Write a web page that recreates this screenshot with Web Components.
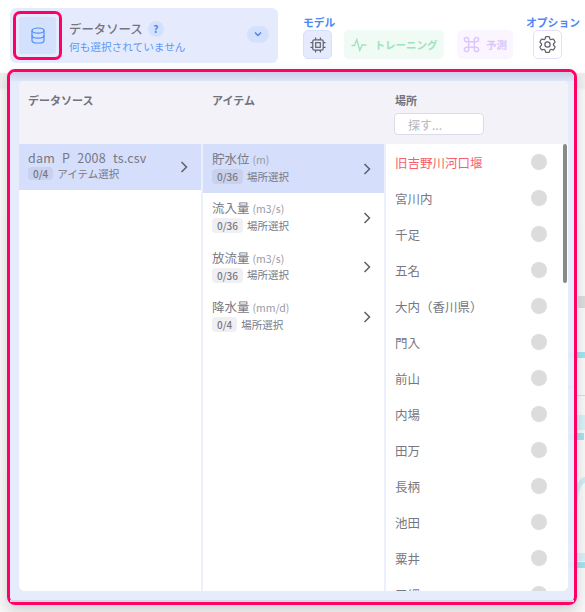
<!DOCTYPE html>
<html lang="ja"><head><meta charset="utf-8">
<style>
html,body{margin:0;padding:0;width:585px;height:612px;overflow:hidden;background:#fff;
font-family:"Noto Sans CJK JP","Noto Sans",sans-serif;}
</style></head><body>
<app-shell></app-shell>
<template id="t-shell">
<style>
:host{display:flex;flex-direction:column;width:585px;height:612px;position:relative;overflow:hidden;background:#fff}
.top{display:flex;height:69px;box-sizing:border-box;padding:8px 0 0 10px;flex:none;position:relative;z-index:2}
.right{display:flex;margin-left:25px}
.shade{position:absolute;left:0;right:0;top:73px;bottom:0;background:linear-gradient(#eeeeee 0,#f1f1f1 15px,#fafafa 17px,#f8f8f8 100%)}
.deco{position:absolute;left:0;top:0;width:585px;height:612px;filter:blur(.6px)}
.deco i{position:absolute;display:block;right:0}
.panel{flex:none;box-sizing:border-box;margin:0 0 0 7px;width:570px;height:536px;border:3px solid #ff0066;border-radius:8px;
background:rgba(229,235,253,.93);padding:9px 6px 11px 9px;box-shadow:0 6px 14px rgba(0,0,0,.16);position:relative;z-index:1}
.panel::before{content:"";position:absolute;left:0;right:0;top:0;height:9px;background:linear-gradient(#c9d0e6,#dfe5f8);border-radius:5px 5px 0 0}
.panel::after{content:"";position:absolute;left:0;right:0;bottom:0;height:2px;background:#d4d6e2}
.inner{height:100%;display:grid;grid-template-columns:184px 183px 1fr;grid-template-rows:63px 1fr;border-radius:6px;overflow:hidden;background:#fff;position:relative}
</style>
<div class="shade"></div>
<div class="deco">
<i style="top:352px;left:568px;height:6px;background:#a5e3ef"></i>
<i style="top:385px;left:568px;width:7px;height:4px;background:#cdc6f8"></i>
<i style="top:395px;left:577px;height:1px;background:#ddd6f8"></i>
<i style="top:415px;left:568px;height:15px;background:#d9f0f6"></i>
<i style="top:433px;left:568px;right:1px;height:7px;background:#a5e3ef"></i>
<i style="top:477px;left:568px;height:60px;border-radius:100% 0 0 0;border-left:6px solid #cdeef4;border-top:6px solid #cdeef4"></i>
<i style="top:553px;left:568px;height:8px;background:#d9f0f6"></i>
<i style="top:562px;left:568px;height:6px;background:#a5e3ef"></i>
<i style="top:296px;left:578px;height:12px;background:#dcdcdc"></i>
</div>
<div class="top">
<source-select></source-select>
<div class="right"><tool-bar></tool-bar></div>
</div>
<div class="panel"><div class="inner">
<col-head label="データソース"></col-head><col-head label="アイテム"></col-head><col-head label="場所" search></col-head>
<list-col>
<nav-row selected file name="dam_P_2008_ts.csv" count="0/4" hint="アイテム選択"></nav-row>
</list-col>
<list-col>
<nav-row selected name="貯水位" unit="(m)" count="0/36" hint="場所選択" tall></nav-row>
<nav-row name="流入量" unit="(m3/s)" count="0/36" hint="場所選択" tall></nav-row>
<nav-row name="放流量" unit="(m3/s)" count="0/36" hint="場所選択" tall></nav-row>
<nav-row name="降水量" unit="(mm/d)" count="0/4" hint="場所選択" tall></nav-row>
</list-col>
<place-list></place-list>
</div></div>
</template>

<template id="t-source">
<style>
:host{display:flex;align-items:center;box-sizing:border-box;width:268px;height:55px;background:#e5ebfd;border-radius:6px;padding:0 9px 0 3px;position:relative}
.ic{box-sizing:border-box;width:49px;height:49px;border:3px solid #ff0066;border-radius:7px;padding:3px;flex:none}
.ic div{width:100%;height:100%;background:#d3e1fd;border-radius:3px;display:flex;align-items:center;justify-content:center}
svg{display:block}
.txt{flex:1;margin-left:7px;min-width:0;margin-top:2px}
.t{display:flex;align-items:center;font-size:12.4px;line-height:18px;color:#75757f;font-weight:500}
.q{width:16px;height:16px;border-radius:50%;background:#d3e1fd;color:#4b83f5;font-size:10px;font-weight:700;text-align:center;line-height:16px;margin-left:5px}
.s{font-size:10.65px;line-height:15px;color:#5f98f8;margin-top:1px}
.dd{width:22px;height:17px;border-radius:9px;background:#d3e1fd;display:flex;align-items:center;justify-content:center;flex:none;margin-top:-3px}
</style>
<div class="ic"><div><svg width="16" height="17" viewBox="0 0 16 17" fill="none" stroke="#4f8df8" stroke-width="1.2"><ellipse cx="8" cy="3.6" rx="6" ry="2.6"/><path d="M2 3.6v9.8c0 1.4 2.7 2.6 6 2.6s6-1.2 6-2.6V3.6"/><path d="M2 8.5c0 1.4 2.7 2.6 6 2.6s6-1.2 6-2.6"/></svg></div></div>
<div class="txt"><div class="t">データソース<span class="q">?</span></div><div class="s">何も選択されていません</div></div>
<div class="dd"><svg width="8" height="6" viewBox="0 0 8 6" fill="none" stroke="#4f7fe6" stroke-width="1.4"><path d="M1 1.5l3 3 3-3"/></svg></div>
</template>

<template id="t-tool">
<style>
:host{display:flex}
.g{display:flex;flex-direction:column;align-items:flex-start}
.g.mg{width:29px}
.l{font-size:10.8px;line-height:14px;color:#4b87f6;font-weight:700;height:14px;margin-top:7px;white-space:nowrap;margin-bottom:1px}
.b{box-sizing:border-box;height:29px;border-radius:5px;display:flex;align-items:center;justify-content:center;font-size:10.5px;font-weight:700;white-space:nowrap}
svg{display:block}
.m{width:29px;background:#e5ebfd;border:1px solid #d3e1fd}
.tr{width:100px;background:#f0fbf5;color:#a0e2bb;margin-left:12px;gap:8px;margin-top:22px}
.pr{width:56px;background:#faf5ff;color:#dcc6fb;margin-left:13px;gap:6px;margin-top:22px}
.o{width:29px;background:#fff;border:1px solid #e4e0fb;margin-left:7px}
.og{margin-left:13px}
</style>
<div class="g mg"><div class="l">モデル</div><div class="b m"><svg width="16" height="16" viewBox="0 0 16 16" fill="none" stroke="#5f5f6c" stroke-width="1.2"><rect x="2.8" y="2.8" width="10.4" height="10.4" rx="1.5"/><rect x="5.7" y="5.7" width="4.6" height="4.6"/><path d="M5.6 0.5v2.3M10.4 0.5v2.3M5.6 13.2v2.3M10.4 13.2v2.3M0.5 5.6h2.3M0.5 10.4h2.3M13.2 5.6h2.3M13.2 10.4h2.3"/></svg></div></div>
<div class="b tr"><svg width="16" height="14" viewBox="0 0 16 14" fill="none" stroke="#a0e2bb" stroke-width="1.3"><path d="M0.5 7.5h3l2.3-6 3 11 2.2-5.5h4.5"/></svg><span>トレーニング</span></div>
<div class="b pr"><svg width="17" height="17" viewBox="0 0 15 15" fill="none" stroke="#dcc6fb" stroke-width="1.3"><path d="M5 5h5v5H5zM5 5H3.2A1.9 1.9 0 1 1 5 3.2zM10 5V3.2A1.9 1.9 0 1 1 11.8 5zM10 10h1.8A1.9 1.9 0 1 1 10 11.8zM5 10v1.8A1.9 1.9 0 1 1 3.2 10z"/></svg><span>予測</span></div>
<div class="g og"><div class="l">オプション</div><div class="b o"><svg width="21" height="21" viewBox="0 0 24 24" fill="none" stroke="#5f5f6c" stroke-width="1.4" stroke-linejoin="round"><path d="M9.594 3.94c.09-.542.56-.94 1.11-.94h2.593c.55 0 1.02.398 1.11.94l.213 1.281c.063.374.313.686.645.87.074.04.147.083.22.127.325.196.72.257 1.075.124l1.217-.456a1.125 1.125 0 011.37.49l1.296 2.247a1.125 1.125 0 01-.26 1.431l-1.003.827c-.293.24-.438.613-.431.992a6.759 6.759 0 010 .255c-.007.378.138.75.43.99l1.005.828c.424.35.534.954.26 1.43l-1.298 2.247a1.125 1.125 0 01-1.369.491l-1.217-.456c-.355-.133-.75-.072-1.076.124a6.57 6.57 0 01-.22.128c-.331.183-.581.495-.644.869l-.213 1.28c-.09.543-.56.941-1.11.941h-2.594c-.55 0-1.02-.398-1.11-.94l-.213-1.281c-.062-.374-.312-.686-.644-.87a6.52 6.52 0 01-.22-.127c-.325-.196-.72-.257-1.076-.124l-1.217.456a1.125 1.125 0 01-1.369-.49l-1.297-2.247a1.125 1.125 0 01.26-1.431l1.004-.827c.292-.24.437-.613.43-.992a6.932 6.932 0 010-.255c.007-.378-.138-.75-.43-.99l-1.004-.828a1.125 1.125 0 01-.26-1.43l1.297-2.247a1.125 1.125 0 011.37-.491l1.216.456c.356.133.751.072 1.076-.124.072-.044.146-.087.22-.128.332-.183.582-.495.644-.869l.214-1.281z"/><path d="M15 12a3 3 0 11-6 0 3 3 0 016 0z"/></svg></div></div>
</template>

<template id="t-head">
<style>
:host{display:block;background:#f2f2f8;padding:11px 9px 0;font-size:11px;font-weight:700;color:#72727e;line-height:16px;box-sizing:border-box}
input{display:block;box-sizing:border-box;width:90px;height:22px;margin:5px 0 0 -1px;border:1px solid #dcdce8;border-radius:4px;background:#fff;padding:0 13px;font:12px "Noto Sans CJK JP",sans-serif;outline:none}
input::placeholder{color:#b5b5bf}
</style>
<div id="l"></div>
</template>

<template id="t-col">
<style>:host{display:block;box-sizing:border-box;border-right:2px solid #ecf0fd;background:#fff;min-height:0}</style><slot></slot>
</template>

<template id="t-row">
<style>
:host{display:flex;align-items:center;box-sizing:border-box;height:46px;padding:0 13px 0 9px;background:#fff;color:#72727e}
:host([selected]){background:#d5defb}
:host([tall]){height:49.3px}
.c{flex:1;min-width:0;margin-top:-4px}
:host([tall]) .c{margin-top:-2px}
.n{font-size:12.5px;line-height:15px;white-space:nowrap;color:#787884}
:host([file]) #n{letter-spacing:.18px;clip-path:inset(0 0 2.6px 0)}
.n i{font-style:normal;font-size:10.5px;color:#9a9aa5;margin-left:3px}
.h{display:flex;align-items:center;font-size:10.5px;line-height:14px;color:#787884;margin-top:1px}
:host([tall]) .h{margin-top:2px}
.p{background:#f0f0f3;color:#787884;border-radius:4px;padding:0 5px;font-size:10px;font-weight:500;height:13px;line-height:13px;margin-right:4px}
:host([tall]) .p{height:15px;line-height:15px}
:host([selected]) .p{background:#c9d1ec}
svg{display:block;flex:none}
</style>
<div class="c"><div class="n"><span id="n"></span><i id="u"></i></div><div class="h"><span class="p" id="p"></span><span id="h"></span></div></div>
<svg width="8" height="12" viewBox="0 0 8 12" fill="none" stroke="#5f5f6c" stroke-width="1.5"><path d="M1.5 1l5 5-5 5"/></svg>
</template>

<template id="t-places">
<style>
:host{display:block;position:relative;overflow:hidden;background:#fff;min-height:0}
.bar{position:absolute;right:1px;top:0;width:4px;height:139px;background:#8a8a8a;border-radius:2px}
.it{display:flex;align-items:center;justify-content:space-between;height:36px;box-sizing:border-box;padding:0 21px 0 9px;font-size:12.5px;color:#787884;white-space:nowrap}
.it.r{color:#f4606c}
.d{width:16px;height:16px;border-radius:50%;background:#dcdcdc;flex:none}
</style>
<div id="w"></div><div class="bar"></div>
</template>

<script>
const T=id=>document.getElementById(id).content.cloneNode(true);
class Base extends HTMLElement{constructor(){super();this.attachShadow({mode:"open"}).appendChild(T(this.constructor.tpl));}}
class AppShell extends Base{static tpl="t-shell"}
class SourceSelect extends Base{static tpl="t-source"}
class ToolBar extends Base{static tpl="t-tool"}
class ListCol extends Base{static tpl="t-col"}
class ColHead extends Base{static tpl="t-head";
 connectedCallback(){const s=this.shadowRoot;s.getElementById("l").textContent=this.getAttribute("label");
  if(this.hasAttribute("search")&&!s.querySelector("input")){const i=document.createElement("input");i.placeholder="探す...";s.appendChild(i);}}}
class NavRow extends Base{static tpl="t-row";
 connectedCallback(){const s=this.shadowRoot,g=a=>this.getAttribute(a)||"";
  s.getElementById("n").textContent=g("name");s.getElementById("u").textContent=g("unit");
  s.getElementById("p").textContent=g("count");s.getElementById("h").textContent=g("hint");}}
class PlaceList extends Base{static tpl="t-places";
 connectedCallback(){const w=this.shadowRoot.getElementById("w");if(w.children.length)return;
  ["旧吉野川河口堰","宮川内","千足","五名","大内（香川県）","門入","前山","内場","田万","長柄","池田","粟井","三縄"].forEach((t,i)=>{
   const d=document.createElement("div");d.className="it"+(i?"":" r");d.innerHTML="<span></span><div class='d'></div>";d.firstChild.textContent=t;w.appendChild(d);});}}
[["app-shell",AppShell],["source-select",SourceSelect],["tool-bar",ToolBar],["list-col",ListCol],["col-head",ColHead],["nav-row",NavRow],["place-list",PlaceList]].forEach(([n,c])=>customElements.define(n,c));
</script>
</body></html>
